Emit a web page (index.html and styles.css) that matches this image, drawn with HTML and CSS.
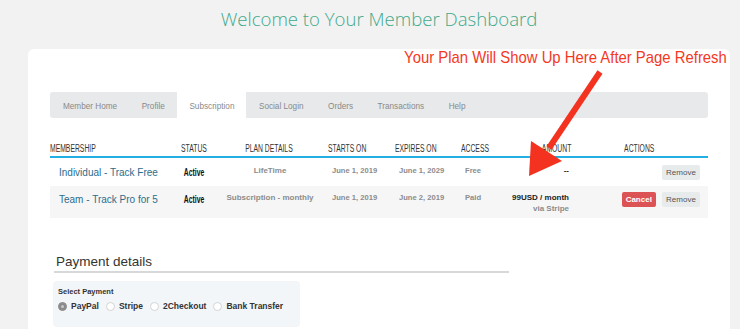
FILE: index.html
```html
<!DOCTYPE html>
<html lang="en">
  <head>
    <meta charset="UTF-8" />
    <meta name="viewport" content="width=device-width, initial-scale=1.0" />
    <title>Member Dashboard</title>
    <link rel="stylesheet" href="styles.css">
  </head>
  <body>
    <main class="page">
      <h1 class="page-title">Welcome to Your Member Dashboard</h1>
      <section class="card">
        <p class="note"><span>Your Plan Will Show Up Here After Page Refresh</span></p>
        <svg class="note-arrow" viewBox="0 0 702 200" width="702" height="200">
          <line x1="572" y1="23" x2="521" y2="99" />
          <polygon points="501,127 503,92 534,112" />
        </svg>

        <nav class="tabs">
          <a href="#">Member Home</a>
          <a href="#">Profile</a>
          <a href="#" class="active">Subscription</a>
          <a href="#">Social Login</a>
          <a href="#">Orders</a>
          <a href="#">Transactions</a>
          <a href="#">Help</a>
        </nav>

        <table class="plans">
          <colgroup>
            <col style="width: 125px" />
            <col style="width: 39px" />
            <col style="width: 112px" />
            <col style="width: 67px" />
            <col style="width: 66px" />
            <col style="width: 41px" />
            <col style="width: 73px" />
            <col style="width: 135px" />
          </colgroup>
          <thead>
            <tr>
              <th><span class="cond">Membership</span></th>
              <th class="center"><span class="cond">Status</span></th>
              <th class="center"><span class="cond">Plan Details</span></th>
              <th><span class="cond">Starts On</span></th>
              <th><span class="cond">Expires On</span></th>
              <th><span class="cond">Access</span></th>
              <th class="right"><span class="cond">Amount</span></th>
              <th class="center"><span class="cond">Actions</span></th>
            </tr>
          </thead>
          <tbody>
            <tr>
              <td class="name">Individual - Track Free</td>
              <td class="center status"><span class="cond">Active</span></td>
              <td class="center">LifeTime</td>
              <td class="date">June 1, 2019</td>
              <td class="date">June 1, 2029</td>
              <td class="date">Free</td>
              <td class="right amount">--</td>
              <td class="right actions">
                <button class="btn">Remove</button>
              </td>
            </tr>
            <tr class="striped">
              <td class="name">Team - Track Pro for 5</td>
              <td class="center status"><span class="cond">Active</span></td>
              <td class="center">Subscription - monthly</td>
              <td class="date">June 1, 2019</td>
              <td class="date">June 2, 2019</td>
              <td class="date">Paid</td>
              <td class="right amount">
                99USD / month<br />
                <span class="via">via Stripe</span>
              </td>
              <td class="right actions">
                <button class="btn btn-cancel">Cancel</button>
                <button class="btn">Remove</button>
              </td>
            </tr>
          </tbody>
        </table>

        <div class="payment">
          <h2>Payment details</h2>
          <div class="payment-box">
            <div class="payment-label">Select Payment</div>
            <div class="payment-options">
              <label><span class="radio checked"></span>PayPal</label>
              <label><span class="radio"></span>Stripe</label>
              <label><span class="radio"></span>2Checkout</label>
              <label><span class="radio"></span>Bank Transfer</label>
            </div>
          </div>
        </div>
      </section>
    </main>
  </body>
</html>
```

FILE: styles.css
```css
body {
  margin: 0;
  background: #f2f2f2;
  font-family: "Liberation Sans", Arial, sans-serif;
  color: #333333;
}

.page {
  padding: 0 10px 0 28px;
}

.page-title {
  margin: 0;
  padding-top: 6px;
  height: 43px;
  font-family: "Open Sans", sans-serif;
  font-weight: 300;
  font-size: 18.6px;
  line-height: 26px;
  text-align: center;
  color: #3fa98b;
}

.card {
  position: relative;
  background: #ffffff;
  border-radius: 6px;
  padding: 0 22px 30px;
  min-height: 300px;
}

.note {
  margin: 0 -19px 0 0;
  font-size: 17px;
  line-height: 18px;
  text-align: right;
  color: #f3391f;
}

.note span {
  display: inline-block;
  transform: scaleX(0.875);
  transform-origin: right center;
}

.note-arrow {
  position: absolute;
  left: 0;
  top: 0;
  pointer-events: none;
  z-index: 2;
}

.note-arrow line {
  stroke: #f3321f;
  stroke-width: 6;
}

.note-arrow polygon {
  fill: #f3321f;
}

.tabs {
  display: flex;
  margin-top: 25px;
  height: 26px;
  background: #e7e9ea;
  border-radius: 3px;
}

.tabs a {
  display: flex;
  align-items: center;
  padding: 2px 12px 0 12.5px;
  font-size: 8.2px;
  color: #8a8a8a;
  text-decoration: none;
}

.tabs a:first-child {
  padding-left: 13px;
}

.tabs a.active {
  background: #ffffff;
}

.plans {
  width: 100%;
  margin-top: 24px;
  border-collapse: collapse;
  table-layout: fixed;
}

.cond {
  display: inline-block;
  transform: scaleX(0.68);
  transform-origin: left center;
  white-space: nowrap;
}

.plans th {
  padding: 0 2px;
  font-weight: normal;
  font-size: 10px;
  line-height: 14px;
  text-transform: uppercase;
  text-align: left;
  color: #333333;
  border-bottom: 2px solid #22afe3;
  white-space: nowrap;
}

.plans th:first-child {
  padding-left: 0;
}

.plans td {
  padding: 7px 0 5px 5px;
  font-size: 8px;
  font-weight: bold;
  line-height: 11px;
  color: #8c8c8c;
  vertical-align: top;
  white-space: nowrap;
}

.plans td.date {
  padding-left: 6px;
  font-size: 7.6px;
}

.plans tr.striped td {
  padding-top: 6px;
  padding-bottom: 4px;
  background: #f6f6f6;
}

.plans tr.striped {
  border-top: 1px solid #ffffff;
}

.plans .center {
  text-align: center;
  padding-left: 0;
}

.plans .center .cond {
  transform-origin: center center;
}

.plans .right .cond {
  transform-origin: right center;
}

.plans .right {
  text-align: right;
}

.plans td.name {
  padding-left: 9px;
  font-weight: normal;
  font-size: 10px;
  line-height: 15px;
  color: #2d6d8c;
}

.plans td.status {
  font-size: 10px;
  line-height: 15px;
  color: #111111;
}

.plans td.amount {
  padding-right: 4px;
  padding-top: 8px;
  line-height: 10.5px;
  color: #222222;
}

.plans tr.striped td.amount {
  padding-top: 7px;
}

.plans .via {
  color: #8c8c8c;
}

.plans td.actions {
  padding-right: 8px;
}

.btn {
  height: 15px;
  width: 38px;
  margin-left: 4px;
  padding: 0;
  border: 0;
  border-radius: 2px;
  background: #e8ebec;
  font-family: "Liberation Sans", sans-serif;
  font-size: 8px;
  color: #555555;
}

.btn-cancel {
  width: 34px;
  background: #dc5356;
  color: #ffffff;
  font-weight: bold;
}

.payment {
  margin: 35px 0 0 4px;
  width: 455px;
}

.payment h2 {
  margin: 0;
  padding: 0 0 1px 2px;
  font-weight: normal;
  font-size: 13.5px;
  line-height: 17px;
  color: #333333;
  border-bottom: 2px solid #d6d8d9;
}

.payment-box {
  margin: 8px 0 0 -1px;
  width: 237px;
  padding: 6px 5px 16px;
  background: #f3f6f9;
  border-radius: 4px;
}

.payment-label {
  font-size: 7.5px;
  font-weight: bold;
  color: #333333;
  line-height: 10px;
}

.payment-options {
  display: flex;
  gap: 7px;
  margin-top: 4px;
}

.payment-options label {
  display: flex;
  align-items: center;
  gap: 4px;
  font-size: 8.5px;
  font-weight: bold;
  color: #333333;
}

.radio {
  width: 7px;
  height: 7px;
  border: 1px solid #d3d3d3;
  border-radius: 50%;
  background: #ffffff;
}

.radio.checked {
  background: #8a8a8a;
  border-color: #8a8a8a;
  box-shadow: inset 0 0 0 2px #8a8a8a, inset 0 0 0 4px #c9c9c9;
}
```
